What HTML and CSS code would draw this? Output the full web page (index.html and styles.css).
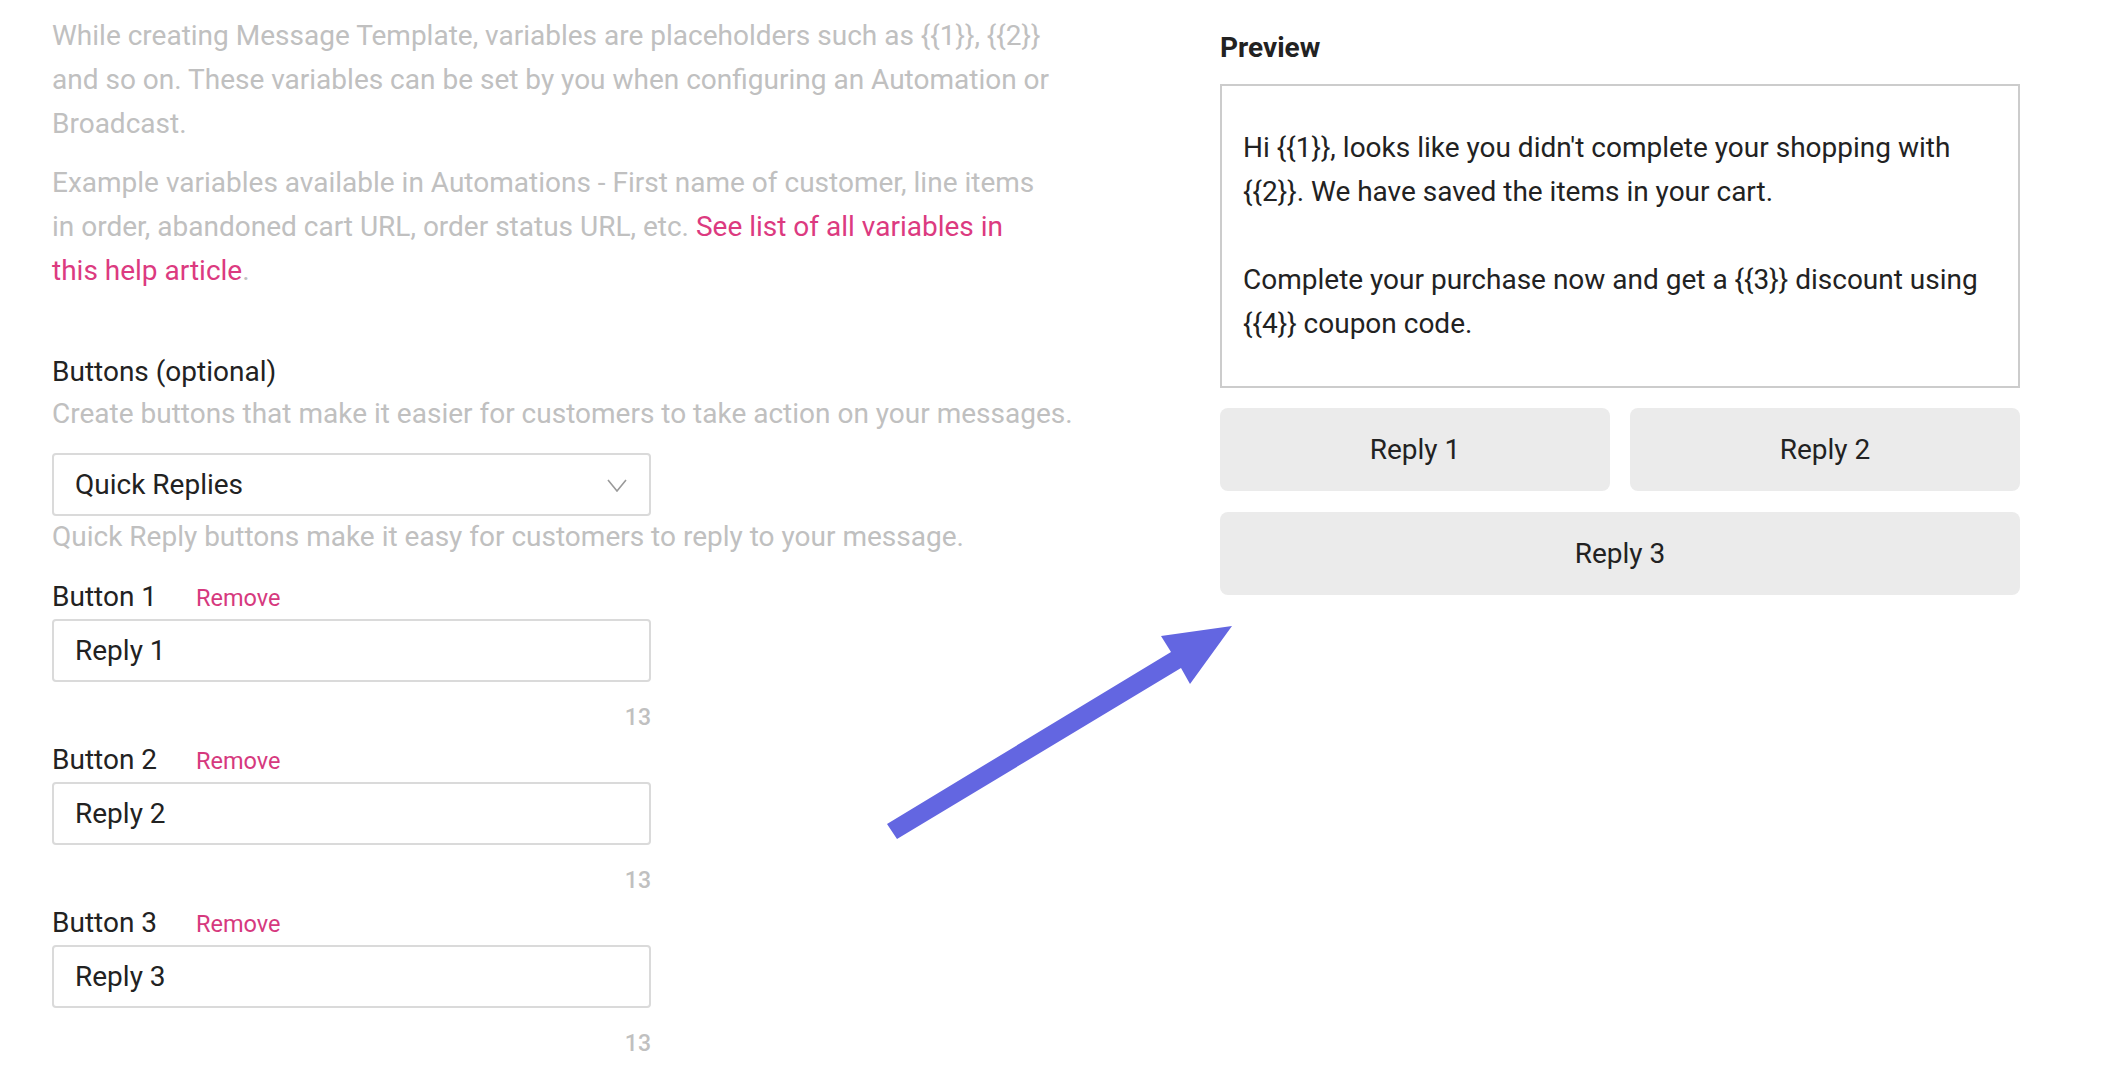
FILE: index.html
```html
<!DOCTYPE html>
<html lang="en">
<head>
<meta charset="utf-8">
<title>Message Template Buttons</title>
<link rel="stylesheet" href="styles.css">
</head>
<body>
<div class="page">
  <section class="editor">
    <p class="help">While creating Message Template, variables are placeholders such as {{1}}, {{2}} and so on. These variables can be set by you when configuring an Automation or Broadcast.</p>
    <p class="help second">Example variables available in Automations - First name of customer, line items in order, abandoned cart URL, order status URL, etc. <a class="link" href="#">See list of all variables in this help article</a>.</p>

    <h3 class="section-title">Buttons (optional)</h3>
    <p class="sub">Create buttons that make it easier for customers to take action on your messages.</p>

    <div class="select">
      <span>Quick Replies</span>
      <svg class="chev" width="20" height="13" viewBox="0 0 20 13"><path d="M1 1 L10 12 L19 1" fill="none" stroke="#9a9a9a" stroke-width="1.6"/></svg>
    </div>
    <p class="sub hint">Quick Reply buttons make it easy for customers to reply to your message.</p>

    <div class="btn-group first">
      <div class="label-row"><span class="label">Button 1</span><a class="remove" href="#">Remove</a></div>
      <div class="input">Reply 1</div>
      <div class="counter">13</div>
    </div>
    <div class="btn-group">
      <div class="label-row"><span class="label">Button 2</span><a class="remove" href="#">Remove</a></div>
      <div class="input">Reply 2</div>
      <div class="counter">13</div>
    </div>
    <div class="btn-group">
      <div class="label-row"><span class="label">Button 3</span><a class="remove" href="#">Remove</a></div>
      <div class="input">Reply 3</div>
      <div class="counter">13</div>
    </div>
  </section>

  <section class="preview">
    <h3 class="preview-title">Preview</h3>
    <div class="preview-box">
      <p>Hi {{1}}, looks like you didn't complete your shopping with {{2}}. We have saved the items in your cart.</p>
      <p class="gap">Complete your purchase now and get a {{3}} discount using {{4}} coupon code.</p>
    </div>
    <div class="replies">
      <div class="reply">Reply 1</div>
      <div class="reply">Reply 2</div>
      <div class="reply wide">Reply 3</div>
    </div>
  </section>
</div>

<svg class="arrow" width="2110" height="1068" viewBox="0 0 2110 1068">
  <polygon points="887,824 1171,652 1161,636 1232,626 1190,684 1181,668 897,839" fill="#6366e1"/>
</svg>
</body>
</html>
```

FILE: styles.css
```css
* { box-sizing: border-box; }

html, body {
  margin: 0;
  padding: 0;
  background: #ffffff;
}

body {
  font-family: Roboto, "Liberation Sans", Arial, sans-serif;
  color: #222222;
  width: 2110px;
  height: 1068px;
  overflow: hidden;
  position: relative;
}

.page {
  display: flex;
  align-items: flex-start;
}

.editor {
  width: 1220px;
  flex: none;
  padding: 14px 0 0 52px;
}

.help {
  margin: 0;
  max-width: 1002px;
  font-size: 28px;
  line-height: 44px;
  color: #c0c0c0;
}

.help.second {
  margin-top: 15px;
}

.link {
  color: #dc3a80;
  text-decoration: none;
}

.section-title {
  margin: 59px 0 0;
  font-size: 28px;
  line-height: 40px;
  font-weight: 400;
  color: #222222;
}

.sub {
  margin: 2px 0 0;
  font-size: 28px;
  line-height: 40px;
  color: #c0c0c0;
  white-space: nowrap;
}

.select {
  margin-top: 19px;
  width: 599px;
  height: 63px;
  border: 2px solid #dadada;
  border-radius: 4px;
  display: flex;
  align-items: center;
  justify-content: space-between;
  padding: 0 22px 0 21px;
  font-size: 28px;
  color: #222222;
}

.chev {
  display: block;
  margin-top: 2px;
}

.hint {
  margin-top: 1px;
}

.btn-group {
  width: 599px;
  margin-top: 9px;
}

.btn-group.first {
  margin-top: 22px;
}

.label-row {
  display: flex;
  align-items: baseline;
  height: 36px;
  line-height: 36px;
}

.label {
  font-size: 28px;
  color: #222222;
}

.remove {
  margin-left: 39px;
  font-size: 23.5px;
  color: #d6397e;
  text-decoration: none;
}

.input {
  margin-top: 4px;
  height: 63px;
  border: 2px solid #dadada;
  border-radius: 4px;
  display: flex;
  align-items: center;
  padding: 0 21px;
  font-size: 28px;
  color: #222222;
}

.counter {
  margin-top: 21px;
  height: 30px;
  line-height: 30px;
  text-align: right;
  font-size: 23px;
  font-weight: 500;
  color: #c0c0c0;
}

.preview {
  width: 800px;
  flex: none;
  padding-top: 26px;
}

.preview-title {
  margin: 0;
  font-size: 28px;
  line-height: 44px;
  font-weight: 700;
  color: #222222;
}

.preview-box {
  margin-top: 14px;
  border: 2px solid #cccccc;
  padding: 40px 22px 40px 21px;
  font-size: 28px;
  line-height: 44px;
  color: #222222;
}

.preview-box p {
  margin: 0;
}

.preview-box p.gap {
  margin-top: 44px;
}

.replies {
  margin-top: 20px;
  display: grid;
  grid-template-columns: 1fr 1fr;
  gap: 21px 20px;
}

.reply {
  height: 83px;
  background: #ebebeb;
  border-radius: 8px;
  display: flex;
  align-items: center;
  justify-content: center;
  font-size: 28px;
  color: #222222;
}

.reply.wide {
  grid-column: 1 / span 2;
}

.arrow {
  position: absolute;
  left: 0;
  top: 0;
  pointer-events: none;
}
```
